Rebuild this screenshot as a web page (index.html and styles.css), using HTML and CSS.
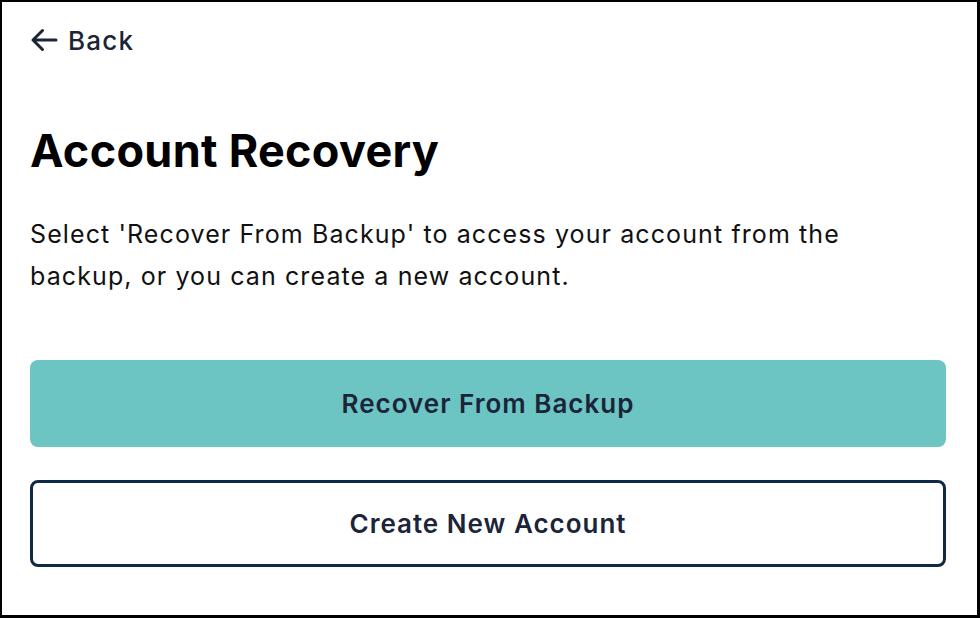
FILE: index.html
```html
<!DOCTYPE html>
<html>
<head>
<meta charset="utf-8">
<link rel="stylesheet" href="styles.css">
</head>
<body>
<div class="frame">
  <a class="back" href="#">
    <svg class="back-icon" width="28" height="24" viewBox="0 0 28 24" fill="none" stroke="currentColor" stroke-width="3" stroke-linecap="round" stroke-linejoin="round">
      <path d="M3 12 H26 M12.5 2.5 L3 12 L12.5 21.5"/>
    </svg>
    <span>Back</span>
  </a>
  <h1 class="title">Account Recovery</h1>
  <p class="desc">Select 'Recover From Backup' to access your account from the backup, or you can create a new account.</p>
  <div class="actions">
    <button class="btn btn-primary">Recover From Backup</button>
    <button class="btn btn-outline">Create New Account</button>
  </div>
</div>
</body>
</html>
```

FILE: styles.css
```css
* { box-sizing: border-box; }
html, body { margin: 0; padding: 0; background: #fff; }
body { font-family: Inter, "Noto Sans", "Liberation Sans", sans-serif; }

.frame {
  width: 980px;
  height: 618px;
  border-style: solid;
  border-color: #000;
  border-width: 2px 3px 3px 2px;
  padding: 22px 31px 0 28px;
  display: flex;
  flex-direction: column;
}

.back {
  display: flex;
  align-items: center;
  gap: 10px;
  color: #1c2436;
  text-decoration: none;
  font-size: 26px;
  font-weight: 500;
  letter-spacing: 1.2px;
  height: 32px;
}
.back-icon { flex: none; }

.title {
  margin: 69px 0 0;
  font-size: 45px;
  font-weight: 700;
  line-height: 52px;
  color: #000;
  letter-spacing: 0.3px;
}

.desc {
  margin: 36px 0 0;
  font-size: 25px;
  line-height: 42px;
  color: #111;
  letter-spacing: 1.1px;
  max-width: 860px;
}

.actions {
  margin-top: 63px;
  display: flex;
  flex-direction: column;
  gap: 33px;
}

.btn {
  font-family: inherit;
  font-size: 26px;
  font-weight: 600;
  letter-spacing: 1px;
  color: #1b2438;
  height: 87px;
  border-radius: 8px;
  width: 100%;
  cursor: pointer;
}
.btn-primary {
  background: #6cc5c2;
  border: none;
}
.btn-outline {
  background: #fff;
  border: 3px solid #0f2a47;
}
```
